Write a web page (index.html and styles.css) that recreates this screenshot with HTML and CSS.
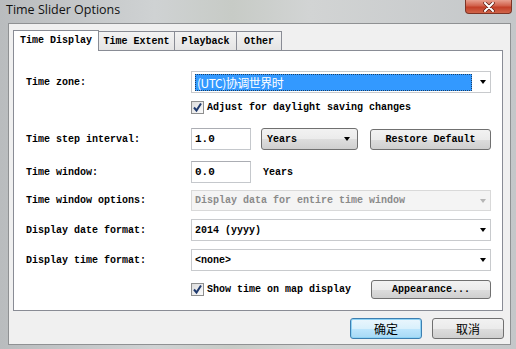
FILE: index.html
```html
<!DOCTYPE html>
<html lang="en">
<head>
    <meta charset="UTF-8">
    <title>Time Slider Options</title>
    <link rel="stylesheet" href="styles.css">
</head>
<body>
    <div class="window">
        <!-- Title bar -->
        <div class="titlebar">
            <span class="title">Time Slider Options</span>
            <div class="close">
                <svg width="14" height="10" viewBox="0 0 14 10">
                    <path d="M3 1 L11 9 M11 1 L3 9" stroke="#5a1c12" stroke-width="3.4" stroke-linecap="round"/>
                    <path d="M3 1 L11 9 M11 1 L3 9" stroke="#fff" stroke-width="2" stroke-linecap="round"/>
                </svg>
            </div>
        </div>

        <div class="client">
            <!-- Tabs -->
            <div class="tabs">
                <div class="tab active tab-display">Time Display</div>
                <div class="tab tab-extent">Time Extent</div>
                <div class="tab tab-playback">Playback</div>
                <div class="tab tab-other">Other</div>
            </div>

            <div class="panel">
                <div class="row row-zone">
                    <label>Time zone:</label>
                    <div class="combo wide">
                        <span class="selected">(UTC)协调世界时</span>
                        <span class="arrow"></span>
                    </div>
                </div>

                <div class="row row-dst">
                    <span></span>
                    <div class="check-line">
                        <span class="checkbox"><svg width="11" height="11" viewBox="0 0 11 11"><path d="M2 5.5 L4.5 8.5 L9 1.5" fill="none" stroke="#1f3a6e" stroke-width="2"/></svg></span>
                        <span>Adjust for daylight saving changes</span>
                    </div>
                </div>

                <div class="row row-step">
                    <label>Time step interval:</label>
                    <div class="inline">
                        <div class="input">1.0</div>
                        <div class="combo button-combo">
                            <span>Years</span>
                            <span class="arrow"></span>
                        </div>
                        <div class="button restore">Restore Default</div>
                    </div>
                </div>

                <div class="row row-window">
                    <label>Time window:</label>
                    <div class="inline">
                        <div class="input">0.0</div>
                        <span class="unit">Years</span>
                    </div>
                </div>

                <div class="row row-options">
                    <label>Time window options:</label>
                    <div class="combo wide disabled">
                        <span>Display data for entire time window</span>
                        <span class="arrow"></span>
                    </div>
                </div>

                <div class="row row-date">
                    <label>Display date format:</label>
                    <div class="combo wide">
                        <span>2014 (yyyy)</span>
                        <span class="arrow"></span>
                    </div>
                </div>

                <div class="row row-time">
                    <label>Display time format:</label>
                    <div class="combo wide">
                        <span>&lt;none&gt;</span>
                        <span class="arrow"></span>
                    </div>
                </div>

                <div class="row row-show">
                    <span></span>
                    <div class="inline spread">
                        <div class="check-line">
                            <span class="checkbox"><svg width="11" height="11" viewBox="0 0 11 11"><path d="M2 5.5 L4.5 8.5 L9 1.5" fill="none" stroke="#1f3a6e" stroke-width="2"/></svg></span>
                            <span>Show time on map display</span>
                        </div>
                        <div class="button appearance">Appearance...</div>
                    </div>
                </div>
            </div>

            <!-- Dialog buttons -->
            <div class="footer">
                <div class="button dlg default">确定</div>
                <div class="button dlg">取消</div>
            </div>
        </div>
    </div>
</body>
</html>
```

FILE: styles.css
```css
/* Base */
* {
    margin: 0;
    padding: 0;
    box-sizing: border-box;
}

body {
    width: 516px;
    height: 349px;
    overflow: hidden;
    font-family: 'Liberation Mono', 'Noto Sans CJK SC', monospace;
    font-size: 10px;
    color: #000;
    background: #6f8a6a;
}

/* Window frame */
.window {
    width: 516px;
    height: 349px;
    display: flex;
    flex-direction: column;
    padding: 0 5px 4px 8px;
    background: linear-gradient(90deg, #b9bcbe 0%, #cfd2d3 30%, #c7cbc6 45%, #d2d4d4 60%, #c4c7c9 100%);
}

.titlebar {
    height: 23px;
    display: flex;
    align-items: flex-start;
    justify-content: space-between;
    margin-left: -8px;
    margin-right: -5px;
}

.title {
    font-family: 'Open Sans', 'Noto Sans', sans-serif;
    font-size: 12.5px;
    margin: 1px 0 0 6px;
    color: #111;
}

.close {
    width: 47px;
    height: 14px;
    margin-right: 4px;
    display: flex;
    align-items: center;
    justify-content: center;
    border: 1px solid #7d3426;
    border-top: none;
    border-radius: 0 0 4px 4px;
    background: linear-gradient(#e8a08f 0%, #d1604a 45%, #c33f27 55%, #d0654a 100%);
}

.client {
    flex: 1;
    background: #f0f0f0;
    border: 1px solid #8f9193;
    padding: 6px 6px 0 4px;
}

/* Tabs */
.tabs {
    display: flex;
    align-items: flex-end;
    height: 21px;
    position: relative;
    z-index: 1;
    margin-bottom: -1px;
}

.tab {
    height: 19px;
    border: 1px solid #898c95;
    border-bottom: none;
    margin-left: -1px;
    background: linear-gradient(#f3f3f3, #e4e4e4);
    display: flex;
    align-items: center;
    justify-content: center;
    font-weight: bold;
    margin-bottom: 1px;
}

.tab.active {
    height: 21px;
    margin-left: 0;
    margin-bottom: 0;
    background: #fff;
    padding-bottom: 2px;
}

.tab-display { width: 86px; }
.tab-extent { width: 77px; }
.tab-playback { width: 63px; }
.tab-other { width: 46px; }

/* Panel */
.panel {
    width: 490px;
    height: 261px;
    background: #fff;
    border: 1px solid #898c95;
    padding: 0 11px 0 12px;
}

.row {
    display: grid;
    grid-template-columns: 165px 300px;
    align-items: center;
    height: 22px;
}

.row label {
    font-weight: bold;
}

.row-zone { margin-top: 20px; }
.row-dst { margin-top: 7px; height: 14px; }
.row-step { margin-top: 14px; }
.row-window { margin-top: 11px; }
.row-options { margin-top: 7px; height: 21px; }
.row-date { margin-top: 8px; }
.row-time { margin-top: 8px; }
.row-show { margin-top: 9px; height: 19px; }

.inline {
    display: flex;
    align-items: center;
    height: 100%;
}

.spread {
    justify-content: space-between;
}

/* Inputs */
.input {
    width: 60px;
    height: 22px;
    border: 1px solid #c5c8cc;
    border-top-color: #abadb3;
    background: #fff;
    padding: 0 3px;
    display: flex;
    align-items: center;
    font-weight: bold;
    font-size: 11px;
}

.unit {
    margin-left: 12px;
    font-weight: bold;
}

.combo {
    height: 22px;
    border: 1px solid #c8cacd;
    background: #fff;
    display: flex;
    align-items: center;
    justify-content: space-between;
    padding: 0 4px 0 3px;
    font-weight: bold;
}

.combo.wide {
    width: 300px;
}

.arrow {
    width: 0;
    height: 0;
    border-left: 3.5px solid transparent;
    border-right: 3.5px solid transparent;
    border-top: 4px solid #000;
    margin-right: 0;
}

.selected {
    background: #3399ff;
    color: #fff;
    outline: 1px dotted #1c3f66;
    outline-offset: -1px;
    width: 277px;
    height: 17px;
    display: flex;
    align-items: center;
    padding-left: 2px;
    font-family: 'Noto Sans CJK SC', sans-serif;
    font-weight: normal;
    font-size: 12px;
    letter-spacing: -0.5px;
}

.combo.disabled {
    background: #f4f4f4;
    border-color: #d9d9d9;
    color: #8a8a8a;
    height: 21px;
}

.combo.disabled .arrow {
    border-top-color: #b5b5b5;
}

.button-combo {
    width: 97px;
    margin-left: 10px;
    border: 1px solid #707070;
    border-radius: 3px;
    background: linear-gradient(#f2f2f2 0%, #ebebeb 50%, #dddddd 51%, #cfcfcf 100%);
    padding: 0 7px 0 5px;
}

/* Buttons */
.button {
    height: 21px;
    border: 1px solid #707070;
    border-radius: 3px;
    background: linear-gradient(#f2f2f2 0%, #ebebeb 50%, #dddddd 51%, #cfcfcf 100%);
    display: flex;
    align-items: center;
    justify-content: center;
    font-weight: bold;
}

.restore {
    width: 121px;
    margin-left: 12px;
}

.appearance {
    width: 120px;
    height: 19px;
}

/* Checkboxes */
.check-line {
    display: flex;
    align-items: center;
    gap: 3px;
    font-weight: bold;
}

.checkbox {
    width: 13px;
    height: 13px;
    border: 1px solid #8e8f8f;
    background: linear-gradient(135deg, #dcdcdc, #fbfbfb);
    display: flex;
    align-items: center;
    justify-content: center;
}

/* Footer */
.footer {
    display: flex;
    justify-content: flex-end;
    gap: 10px;
    margin-top: 7px;
}

.dlg {
    width: 72px;
    height: 21px;
    font-family: 'Noto Sans CJK SC', sans-serif;
    font-weight: normal;
    font-size: 12px;
}

.dlg.default {
    border-color: #3c7fb1;
    box-shadow: inset 0 0 0 1px #8fd3f5;
    background: linear-gradient(#eaf6fd 0%, #d9f0fc 50%, #bee6fd 51%, #a7d9f5 100%);
}
```
